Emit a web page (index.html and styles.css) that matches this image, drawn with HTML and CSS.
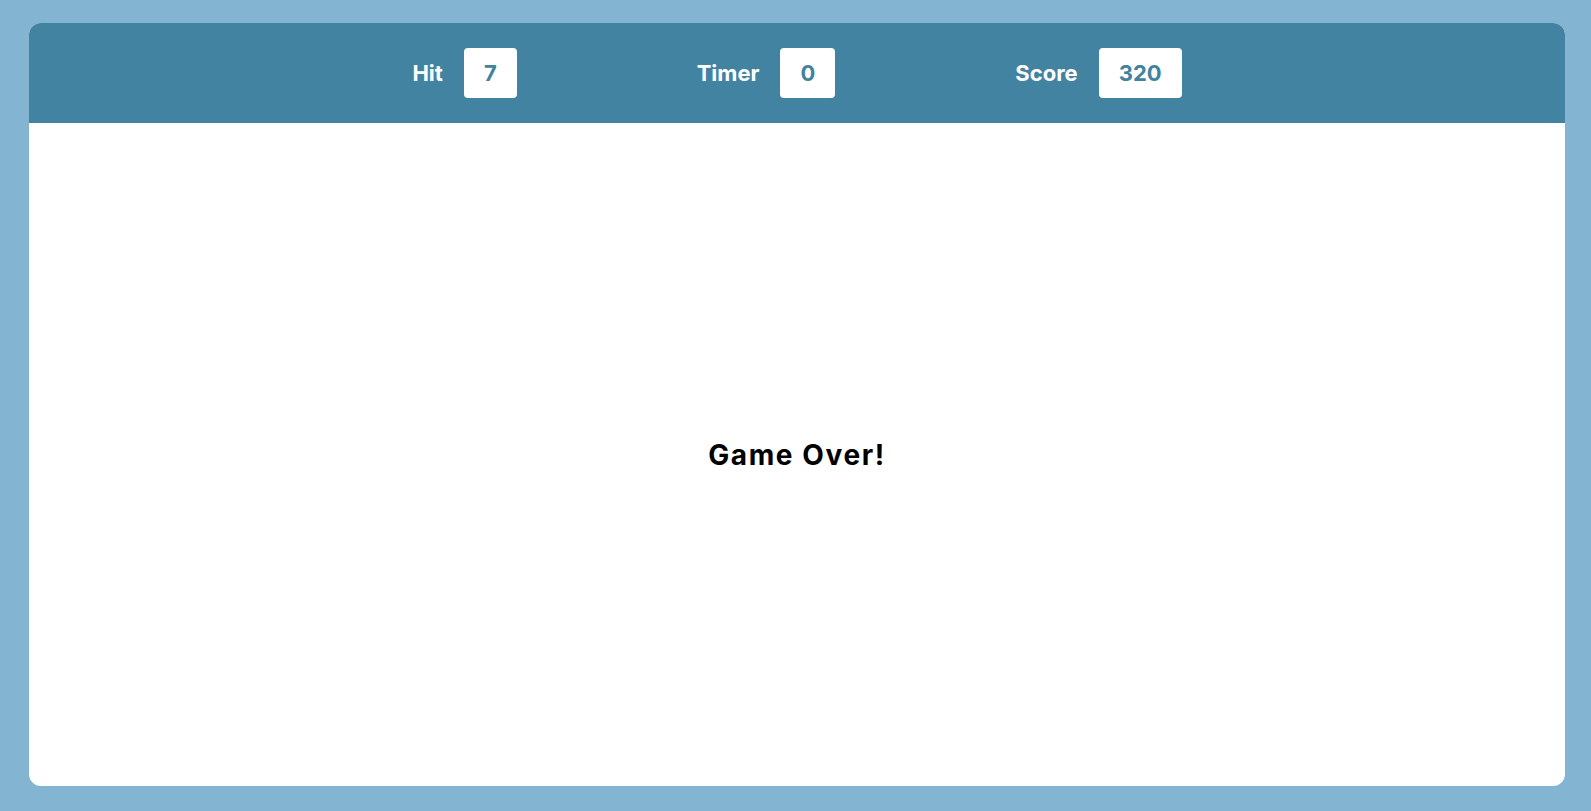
FILE: index.html
```html
<!DOCTYPE html>
<html>
<head>
<meta charset="utf-8">
<link rel="stylesheet" href="styles.css">
</head>
<body>
<div class="board">
  <header class="bar">
    <div class="stat"><span class="label">Hit</span><span class="value">7</span></div>
    <div class="stat"><span class="label">Timer</span><span class="value">0</span></div>
    <div class="stat"><span class="label">Score</span><span class="value">320</span></div>
  </header>
  <main class="field">
    <h1 class="over">Game Over!</h1>
  </main>
</div>
</body>
</html>
```
FILE: styles.css
```css
html, body {
  margin: 0;
  height: 100%;
}
body {
  background: #83b5d2;
  font-family: Inter, "Open Sans", sans-serif;
  box-sizing: border-box;
  padding: 23px 26px 25px 29px;
}
.board {
  height: 100%;
  background: #ffffff;
  border-radius: 12px;
  overflow: hidden;
  display: flex;
  flex-direction: column;
}
.bar {
  height: 100px;
  flex: none;
  background: #4383a2;
  display: flex;
  justify-content: center;
  align-items: center;
  gap: 180px;
}
.stat {
  display: flex;
  align-items: center;
  gap: 21px;
}
.label {
  color: #ffffff;
  font-weight: 700;
  font-size: 22px;
}
.value {
  background: #ffffff;
  color: #41829f;
  font-weight: 700;
  font-size: 22px;
  height: 50px;
  padding: 0 20px;
  border-radius: 4px;
  display: flex;
  align-items: center;
  justify-content: center;
}
.field {
  flex: 1;
  display: flex;
  align-items: center;
  justify-content: center;
}
.over {
  margin: 0;
  font-size: 28px;
  font-weight: 700;
  letter-spacing: 1.6px;
  color: #000000;
}
```
